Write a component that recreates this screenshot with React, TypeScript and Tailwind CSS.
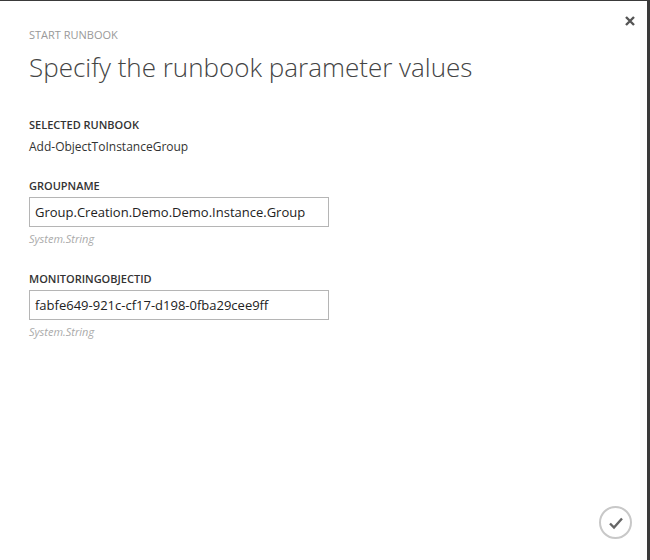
import { useState } from "react";

type Param = { name: string; value: string; type: string };

const PARAMS: Param[] = [
  { name: "GROUPNAME", value: "Group.Creation.Demo.Demo.Instance.Group", type: "System.String" },
  { name: "MONITORINGOBJECTID", value: "fabfe649-921c-cf17-d198-0fba29cee9ff", type: "System.String" },
];

function ParamField({ p }: { p: Param }) {
  const [val, setVal] = useState(p.value);
  return (
    <div className="mt-[26px]">
      <p className="text-[11px] font-semibold text-[#333] leading-[14px]">{p.name}</p>
      <input
        value={val}
        onChange={(e) => setVal(e.target.value)}
        className="mt-[4px] block w-[300px] h-[30px] border border-[#b5b5b5] px-[5px] text-[13px] text-[#222] outline-none"
      />
      <p className="mt-[5px] text-[11px] italic text-[#aaa] leading-[14px]">{p.type}</p>
    </div>
  );
}

export default function App() {
  return (
    <div
      className="relative h-[560px] w-[650px] bg-white border-t border-t-[#3a3a3a] border-r-[3px] border-r-[#3a3a3a] overflow-hidden"
      style={{ fontFamily: '"Open Sans", "Noto Sans", sans-serif' }}
    >
      <button className="absolute right-[12px] top-[15px] text-[#555]" aria-label="Close">
        <svg width="10" height="10" viewBox="0 0 10 10">
          <path d="M1 1 L9 9 M9 1 L1 9" stroke="currentColor" strokeWidth="2.4" />
        </svg>
      </button>

      <div className="pl-[29px] pt-[27px]">
        <p className="text-[11px] text-[#999] leading-[14px]">START RUNBOOK</p>
        <h1 className="mt-[7px] text-[26px] font-light text-[#444] leading-[36px]">
          Specify the runbook parameter values
        </h1>

        <div className="mt-[33px]">
          <p className="text-[11px] font-semibold text-[#333] leading-[14px]">SELECTED RUNBOOK</p>
          <p className="mt-[7px] text-[12px] text-[#333] leading-[16px]">Add-ObjectToInstanceGroup</p>
        </div>

        <div className="-mt-[2px]">
          {PARAMS.map((p, i) => (
            <div key={p.name} className={i > 0 ? "mt-[3px]" : ""}>
              <ParamField p={p} />
            </div>
          ))}
        </div>
      </div>

      <button
        className="absolute right-[15px] bottom-[21px] flex h-[33px] w-[33px] items-center justify-center rounded-full border-2 border-[#c8c8c8] text-[#666]"
        aria-label="OK"
      >
        <svg width="16" height="14" viewBox="0 0 16 14">
          <path d="M2 7.5 L6 11.5 L14 2.5" stroke="currentColor" strokeWidth="2.4" fill="none" />
        </svg>
      </button>
    </div>
  );
}
